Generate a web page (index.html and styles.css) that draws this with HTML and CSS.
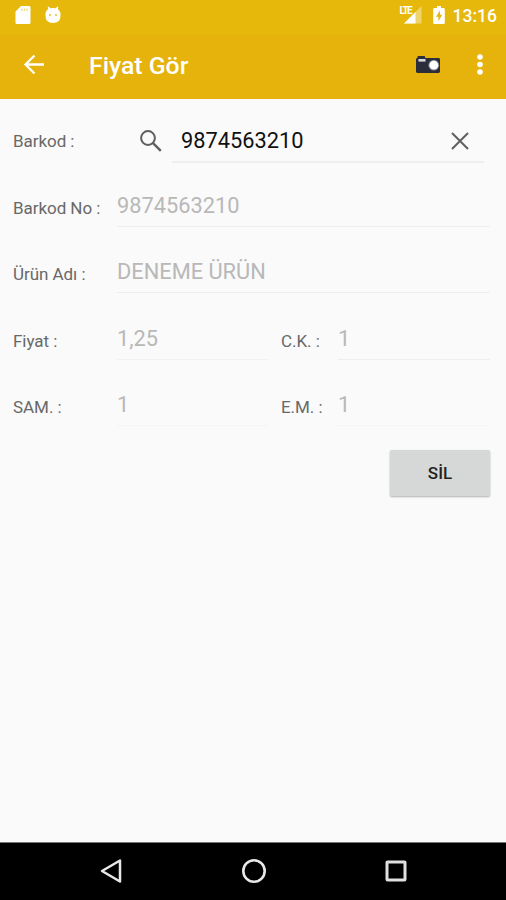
FILE: index.html
```html
<!DOCTYPE html>
<html lang="tr">
<head>
    <meta charset="UTF-8">
    <meta name="viewport" content="width=device-width, initial-scale=1.0">
    <title>Fiyat Gör</title>
    <link rel="stylesheet" href="styles.css">
</head>
<body>
    <div class="status-bar">
        <svg class="sd-icon" width="16" height="20" viewBox="0 0 16 20">
            <path fill="#fff" d="M6 1h8.200q1.300 0 1.300 1.300v15.400q0 1.300-1.300 1.300H1.800Q.5 19 .5 17.700V6.500z"/>
            <path stroke="#e5b80b" stroke-width="1.300" opacity=".5" d="M6.800 3.500v2.500M9.400 3.500v2.500M12 3.500v2.500"/>
        </svg>
        <svg class="debug-icon" width="16" height="20" viewBox="0 0 16 20">
            <path fill="#fff" d="M.5 8.500Q.5 6 3 4.300L2.800 1l2.600 2.300q2.600-.7 5.200 0L13.200 1 13 4.300Q15.500 6 15.500 8.500V11q0 7-7.500 7T.5 11z"/>
            <circle cx="5" cy="10" r=".9" fill="#e5b80b"/>
            <circle cx="11" cy="10" r=".9" fill="#e5b80b"/>
        </svg>
        <div class="status-right">
            <div class="signal">
                <svg width="22" height="20" viewBox="0 0 22 20">
                    <path fill="#fff" fill-opacity=".4" d="M21.500 1v17.500H4z"/>
                    <path fill="#fff" d="M15.500 7v11.500H4z"/>
                </svg>
                <span class="lte">LTE</span>
            </div>
            <svg class="battery" width="12" height="20" viewBox="0 0 12 20">
                <path fill="#fff" d="M4 1h4v2h2.600q1.200 0 1.200 1.200v13.600q0 1.200-1.200 1.200H1.400Q.2 19 .2 17.800V4.200Q.2 3 1.400 3H4z"/>
                <path fill="#e5b80b" d="M7 5.500l-4 6.300h2.400v4.400l3.800-6.400H7z"/>
            </svg>
            <span class="clock">13:16</span>
        </div>
    </div>

    <div class="toolbar">
        <svg class="back" width="22" height="22" viewBox="0 0 22 22">
            <path fill="none" stroke="#fff" stroke-width="2.300" d="M21 10.500H3M11.500 1.500L2.500 10.500l9 9"/>
        </svg>
        <h1>Fiyat Gör</h1>
        <svg class="camera" width="26" height="20" viewBox="0 0 26 20">
            <path fill="#2b2d3b" d="M2.500 3V1.800Q2.500 1 3.300 1h6q.8 0 .8.800V3H23.600q1.400 0 1.400 1.400v12.200q0 1.400-1.400 1.400H2.400Q1 18 1 16.600V4.400Q1 3 2.400 3z"/>
            <path fill="#d8d8dc" d="M3.500 4h7v2.600h-7z"/>
            <circle cx="18.800" cy="10.200" r="5.400" fill="#85889a"/>
            <circle cx="18.800" cy="10.200" r="4.400" fill="#fff"/>
        </svg>
        <svg class="more" width="6" height="22" viewBox="0 0 6 22">
            <circle cx="3" cy="3" r="2.800" fill="#fff"/>
            <circle cx="3" cy="10.500" r="2.800" fill="#fff"/>
            <circle cx="3" cy="18" r="2.800" fill="#fff"/>
        </svg>
    </div>

    <div class="content">
        <div class="row search-row">
            <div class="label">Barkod :</div>
            <svg class="search-icon" width="24" height="24" viewBox="0 0 24 24">
                <circle cx="9" cy="9" r="6.900" fill="none" stroke="#5f5f5f" stroke-width="2"/>
                <path stroke="#5f5f5f" stroke-width="2.400" d="M13.800 13.800l8 8"/>
            </svg>
            <div class="field search-field">
                <span>9874563210</span>
                <svg class="clear" width="18" height="18" viewBox="0 0 18 18">
                    <path stroke="#5f5f5f" stroke-width="2" d="M1 1l16 16M17 1L1 17"/>
                </svg>
            </div>
        </div>
        <div class="row">
            <div class="label">Barkod No :</div>
            <div class="field">9874563210</div>
        </div>
        <div class="row">
            <div class="label">Ürün Adı :</div>
            <div class="field">DENEME ÜRÜN</div>
        </div>
        <div class="row">
            <div class="label">Fiyat :</div>
            <div class="field faint">1,25</div>
            <div class="label short">C.K. :</div>
            <div class="field half">1</div>
        </div>
        <div class="row">
            <div class="label">SAM. :</div>
            <div class="field fainter">1</div>
            <div class="label short">E.M. :</div>
            <div class="field half fainter">1</div>
        </div>
        <button class="btn-delete">SİL</button>
    </div>

    <div class="nav-bar">
        <svg width="24" height="26" viewBox="0 0 24 26">
            <path fill="none" stroke="#e8e8e8" stroke-width="2.500" stroke-linejoin="round" d="M21 2.500v21L3 13z"/>
        </svg>
        <svg width="26" height="26" viewBox="0 0 26 26">
            <circle cx="13" cy="13" r="10.700" fill="none" stroke="#e8e8e8" stroke-width="2.600"/>
        </svg>
        <svg width="24" height="26" viewBox="0 0 24 26">
            <rect x="3" y="4" width="18" height="18" rx=".5" fill="none" stroke="#e0e0e0" stroke-width="3"/>
        </svg>
    </div>
</body>
</html>
```

FILE: styles.css
```css
* {
    box-sizing: border-box;
}

body {
    margin: 0;
    height: 900px;
    display: flex;
    flex-direction: column;
    background-color: #fafafa;
    font-family: Roboto, sans-serif;
    overflow: hidden;
}

svg {
    display: block;
    flex: none;
}

.status-bar {
    height: 34px;
    display: flex;
    align-items: flex-start;
    padding: 5px 9px 0 15px;
    background-color: #e5b80b;
    color: #fff;
}

.debug-icon {
    margin-left: 14px;
}

.status-right {
    margin-left: auto;
    display: flex;
}

.signal {
    position: relative;
}

.lte {
    position: absolute;
    left: 0;
    top: 0;
    font-size: 10px;
    line-height: 11px;
    font-weight: 700;
    letter-spacing: -1.500px;
}

.battery {
    margin-left: 11px;
}

.clock {
    margin-left: 8px;
    font-size: 17.500px;
    line-height: 22px;
    font-weight: 500;
}

.toolbar {
    height: 65px;
    display: flex;
    align-items: center;
    padding: 0 23px;
    padding-bottom: 4px;
    background-color: #e5b30b;
}

.toolbar h1 {
    margin: 2px 0 0 44px;
    font-size: 24.800px;
    line-height: 28px;
    font-weight: 500;
    color: #fff;
}

.camera {
    margin-left: auto;
}

.more {
    margin-left: 36px;
}

.content {
    flex: 1;
    padding: 0 16px 0 13px;
}

.row {
    height: 66.500px;
    display: flex;
    align-items: flex-end;
}

.search-row {
    height: 64px;
    padding-right: 6px;
}

.search-row + .row {
    height: 63.500px;
}

.label {
    width: 104px;
    margin-bottom: 7px;
    font-size: 17px;
    line-height: 24px;
    letter-spacing: -0.050px;
    color: #686868;
    white-space: nowrap;
}

.label.short {
    width: 57px;
    margin-left: 12px;
}

.field {
    flex: 1;
    padding-bottom: 8px;
    border-bottom: 1px solid #eeeeee;
    font-size: 21.800px;
    line-height: 24px;
    color: #b8b8b8;
}

.field.half {
    flex: none;
    width: 152px;
}

.faint {
    border-color: #f2f2f2;
}

.fainter {
    border-color: #f5f5f5;
}

.search-row .label {
    margin-bottom: 10px;
}

.search-icon {
    margin: 0 9px 10px 22px;
}

.search-field {
    display: flex;
    align-items: center;
    justify-content: space-between;
    padding: 0 15px 8px 9px;
    border-bottom: 2px solid #eeeeee;
    color: #111;
}

.btn-delete {
    display: block;
    width: 100px;
    height: 46px;
    margin: 24px 0 0 auto;
    padding: 0;
    border: none;
    border-radius: 2px;
    background-color: #d6d8d7;
    box-shadow: 0 1px 2px rgba(0, 0, 0, 0.3);
    font-family: inherit;
    font-size: 17px;
    font-weight: 500;
    color: #222;
}

.nav-bar {
    height: 58px;
    display: flex;
    justify-content: space-between;
    align-items: center;
    padding: 0 98px 2px 99px;
    border-top: 1px solid #777;
    background-color: #000;
}
```
